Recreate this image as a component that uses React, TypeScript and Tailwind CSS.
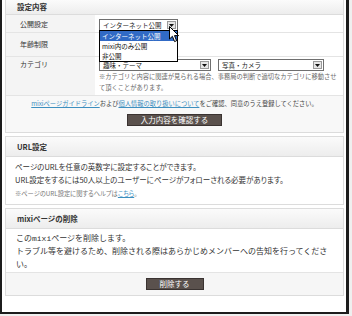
import React from "react";

function FakeSelect({ value, width }: { value: string; width: string }) {
  return (
    <div className={`flex h-[12px] items-stretch border border-[#6f6f6f] bg-white ${width}`}>
      <span className="flex-1 overflow-hidden whitespace-nowrap pl-[3px] text-[6.5px] leading-[10px] text-[#222]">
        {value}
      </span>
      <span className="m-[1px] flex w-[9px] items-center justify-center border border-[#9a9a9a] bg-[#e6e6e6]">
        <svg width="5" height="3" viewBox="0 0 5 3">
          <path d="M0 0h5L2.5 3z" fill="#111" />
        </svg>
      </span>
    </div>
  );
}

function PanelHeader({ title, height }: { title: string; height: string }) {
  return (
    <div
      className={`flex items-center border-b border-[#dcdcdc] bg-gradient-to-b from-[#fbfbfb] to-[#ededed] pl-[11px] text-[7.5px] font-bold text-[#333] ${height}`}
    >
      {title}
    </div>
  );
}

function DarkButton({ label }: { label: string }) {
  return (
    <span className="block h-[12px] border border-[#3a3331] bg-[#5a514d] px-[13px] text-[7.5px] leading-[10px] text-white">
      {label}
    </span>
  );
}

export default function App() {
  return (
    <div className="h-[316px] w-[352px] overflow-hidden bg-[#efefef] font-['Noto_Sans_CJK_JP','Noto_Sans',sans-serif] text-[#333]">
      <div className="h-[314px] w-[349px] border-b-2 border-l-2 border-r-[3px] border-[#1c1c1c] bg-white pl-[3px] pr-[2px]">
        <div className="flex flex-col gap-[3px]">
          {/* 設定内容 */}
          <div className="border-x border-b border-[#dcdcdc]">
            <PanelHeader title="設定内容" height="h-[15px]" />

            <div className="flex h-[18px] border-b border-[#e4e4e4]">
              <div className="w-[89px] bg-[#f4f4f4] pl-[14px] pt-[3px] text-[7px] leading-[12px]">公開設定</div>
              <div className="flex-1 pl-[4px] pt-[4px]">
                <div className="relative w-[79px]">
                  <FakeSelect value="インターネット公開" width="w-[79px]" />
                  <div className="absolute left-0 top-[11px] z-10 w-[79px] border border-black bg-white text-[6.5px] leading-[10px] text-[#111]">
                    <div className="bg-[#316ac5] pl-[2px] text-white">インターネット公開</div>
                    <div className="pl-[2px]">mixi内のみ公開</div>
                    <div className="pl-[2px]">非公開</div>
                  </div>
                  <svg className="absolute left-[70px] top-[7px] z-20" width="11" height="17" viewBox="0 0 11 17">
                    <path d="M0.5 0.5V13L3.4 10.3L5.6 15.6L7.6 14.7L5.5 9.6H9.6Z" fill="#fff" stroke="#000" strokeWidth="1" />
                  </svg>
                </div>
              </div>
            </div>

            <div className="flex h-[24px] border-b border-[#e4e4e4]">
              <div className="w-[89px] bg-[#f4f4f4] pl-[14px] pt-[5px] text-[7px] leading-[12px]">年齢制限</div>
              <div className="flex-1" />
            </div>

            <div className="flex h-[39px] border-b border-[#e4e4e4]">
              <div className="w-[89px] bg-[#f4f4f4] pl-[14px] pt-[1px] text-[7px] leading-[12px]">カテゴリ</div>
              <div className="flex-1 pl-[4px] pt-[2px]">
                <div className="flex gap-[7px]">
                  <FakeSelect value="趣味・テーマ" width="w-[112px]" />
                  <FakeSelect value="写真・カメラ" width="w-[106px]" />
                </div>
                <p className="w-[240px] text-[6.25px] leading-[11px] text-[#666]">
                  ※カテゴリと内容に関連が見られる場合、事務局の判断で適切なカテゴリに移動させて頂くことがあります。
                </p>
              </div>
            </div>

            <div className="flex h-[36px] flex-col items-center bg-[#f8f8f8] pt-[3px]">
              <p className="text-[6.25px] leading-[10px] text-[#444]">
                <a className="text-[#3d8fbf] underline">mixiページガイドライン</a>および
                <a className="text-[#3d8fbf] underline">個人情報の取り扱いについて</a>をご確認、同意のうえ登録してください。
              </p>
              <div className="mt-[5px] flex">
                <DarkButton label="入力内容を確認する" />
              </div>
            </div>
          </div>

          {/* URL設定 */}
          <div className="border border-[#dcdcdc]">
            <PanelHeader title="URL設定" height="h-[20px]" />
            <div className="px-[9px] pb-[5px] pt-[3px] [font-feature-settings:'palt']">
              <p className="text-[7.5px] leading-[13px]">
                ページのURLを任意の英数字に設定することができます。
                <br />
                URL設定をするには50人以上のユーザーにページがフォローされる必要があります。
              </p>
              <p className="mt-[2px] text-[6.25px] leading-[11px] text-[#777]">
                ※ページのURL設定に関するヘルプは<a className="text-[#3d8fbf] underline">こちら</a>。
              </p>
            </div>
          </div>

          {/* mixiページの削除 */}
          <div className="border border-[#dcdcdc]">
            <PanelHeader title="mixiページの削除" height="h-[20px]" />
            <div className="px-[10px] pb-[1px] pt-[3px] font-['Liberation_Mono','Noto_Sans_CJK_JP',monospace] text-[8px] leading-[13px]">
              <p>このmixiページを削除します。</p>
              <p>トラブル等を避けるため、削除される際はあらかじめメンバーへの告知を行ってください。</p>
            </div>
            <div className="flex h-[23px] items-center justify-center border-t border-[#e4e4e4] bg-[#f6f6f6]">
              <DarkButton label="削除する" />
            </div>
          </div>
        </div>
      </div>
    </div>
  );
}
